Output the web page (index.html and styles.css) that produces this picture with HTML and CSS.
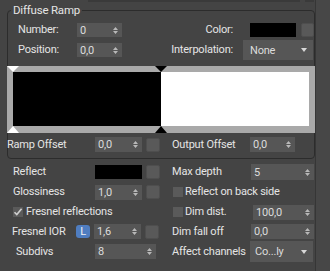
FILE: index.html
```html
<!DOCTYPE html>
<html>
<head>
<meta charset="utf-8">
<link rel="stylesheet" href="styles.css">
</head>
<body>
<div class="app">
  <div class="panel">
    <div class="cutoff"><span class="cut-field"></span><span class="cut-btn"></span></div>
    <fieldset class="group">
      <legend>Diffuse Ramp</legend>
      <div class="grow row-a">
        <span class="lbl glbl">Number:</span>
        <div class="spin gspin"><span>0</span><svg class="arr" width="5" height="7" viewBox="0 0 5 7"><path d="M2.5 0L5 3H0zM0 4H5L2.5 7z"/></svg></div>
        <span class="lbl rlbl">Color:</span>
        <div class="swatch color-sw"></div>
        <div class="sq color-btn"></div>
      </div>
      <div class="grow row-b">
        <span class="lbl glbl">Position:</span>
        <div class="spin gspin"><span>0,0</span><svg class="arr" width="5" height="7" viewBox="0 0 5 7"><path d="M2.5 0L5 3H0zM0 4H5L2.5 7z"/></svg></div>
        <span class="lbl rlbl">Interpolation:</span>
        <div class="drop interp"><span>None</span><svg class="darr" width="6" height="4" viewBox="0 0 6 4"><path d="M0 0H6L3 4z"/></svg></div>
      </div>
      <div class="ramp">
        <div class="ramp-black"></div>
        <div class="ramp-white"></div>
        <svg class="mark mark-tl" width="12" height="6" viewBox="0 0 12 6"><path d="M0 0H12L6 6z" fill="#fff"/></svg>
        <svg class="mark mark-bl" width="12" height="7" viewBox="0 0 12 7"><path d="M0 7H12L6 0z" fill="#fff"/></svg>
        <svg class="mark mark-tm" width="12" height="6" viewBox="0 0 12 6"><path d="M0 0H12L6 6z" fill="#000"/></svg>
        <svg class="mark mark-bm" width="12" height="7" viewBox="0 0 12 7"><path d="M0 7H12L6 0z" fill="#000"/></svg>
      </div>
      <div class="grow row-c">
        <span class="lbl olbl">Ramp Offset</span>
        <div class="spin ospin"><span>0,0</span><svg class="arr" width="5" height="7" viewBox="0 0 5 7"><path d="M2.5 0L5 3H0zM0 4H5L2.5 7z"/></svg></div>
        <div class="sq"></div>
        <span class="lbl olbl2">Output Offset</span>
        <div class="spin ospin2"><span>0,0</span><svg class="arr" width="5" height="7" viewBox="0 0 5 7"><path d="M2.5 0L5 3H0zM0 4H5L2.5 7z"/></svg></div>
      </div>
    </fieldset>

    <div class="props">
      <div class="cell">
        <span class="lbl llbl">Reflect</span>
        <div class="swatch lsw"></div>
        <div class="sq"></div>
      </div>
      <div class="cell rc">
        <span class="lbl rplbl">Max depth</span>
        <div class="spin rspin tall"><span>5</span><svg class="arr" width="5" height="7" viewBox="0 0 5 7"><path d="M2.5 0L5 3H0zM0 4H5L2.5 7z"/></svg></div>
      </div>

      <div class="cell">
        <span class="lbl llbl">Glossiness</span>
        <div class="spin lspin"><span>1,0</span><svg class="arr" width="5" height="7" viewBox="0 0 5 7"><path d="M2.5 0L5 3H0zM0 4H5L2.5 7z"/></svg></div>
        <div class="sq"></div>
      </div>
      <div class="cell rc">
        <span class="cb"></span>
        <span class="lbl">Reflect on back side</span>
      </div>

      <div class="cell">
        <span class="cb on"><svg width="10" height="10" viewBox="0 0 10 10"><path d="M1.5 5.2L3.8 7.6L8.6 1.8" fill="none" stroke="#cfcfcf" stroke-width="1.6"/></svg></span>
        <span class="lbl">Fresnel reflections</span>
      </div>
      <div class="cell rc">
        <span class="cb"></span>
        <span class="lbl dimlbl">Dim dist.</span>
        <div class="spin dspin"><span>100,0</span><svg class="arr" width="5" height="7" viewBox="0 0 5 7"><path d="M2.5 0L5 3H0zM0 4H5L2.5 7z"/></svg></div>
      </div>

      <div class="cell">
        <span class="lbl iorlbl">Fresnel IOR</span>
        <span class="lbtn">L</span>
        <div class="spin lspin"><span>1,6</span><svg class="arr" width="5" height="7" viewBox="0 0 5 7"><path d="M2.5 0L5 3H0zM0 4H5L2.5 7z"/></svg></div>
        <div class="sq"></div>
      </div>
      <div class="cell rc">
        <span class="lbl rplbl">Dim fall off</span>
        <div class="spin rspin"><span>0,0</span><svg class="arr" width="5" height="7" viewBox="0 0 5 7"><path d="M2.5 0L5 3H0zM0 4H5L2.5 7z"/></svg></div>
      </div>

      <div class="cell">
        <span class="lbl sublbl">Subdivs</span>
        <div class="spin subspin"><span>8</span><svg class="arr" width="5" height="7" viewBox="0 0 5 7"><path d="M2.5 0L5 3H0zM0 4H5L2.5 7z"/></svg></div>
      </div>
      <div class="cell rc">
        <span class="lbl afflbl">Affect channels</span>
        <div class="drop affdrop"><span>Co...ly</span><svg class="darr" width="6" height="4" viewBox="0 0 6 4"><path d="M0 0H6L3 4z"/></svg></div>
      </div>
    </div>
  </div>
  <div class="strip"></div>
</div>
</body>
</html>
```

FILE: styles.css
```css
html, body {
  margin: 0;
  padding: 0;
  background: #444444;
}
body {
  font-family: Roboto, "Noto Sans", sans-serif;
  font-size: 11px;
  letter-spacing: -0.2px;
  color: #e4e4e4;
  width: 330px;
  height: 271px;
  overflow: hidden;
}
.app {
  display: flex;
  height: 271px;
}
.panel {
  width: 315px;
  flex: none;
}
.strip {
  flex: 1;
  background: #474747;
  border-left: 1px solid #363636;
}
.cutoff {
  height: 2px;
  display: flex;
}
.cut-field {
  margin-left: 88px;
  width: 212px;
  background: #3a3a3a;
}
.cut-btn {
  margin-left: 5px;
  width: 9px;
  background: #3a3a3a;
}
.group {
  margin: 1px 0 0 7px;
  padding: 6px 0 6px 0;
  width: 308px;
  box-sizing: border-box;
  border: 1px solid #2c2c2c;
  border-radius: 4px;
  min-width: 0;
}
.group legend {
  padding: 0 2px;
  margin-left: 3px;
  line-height: 14px;
  font-size: 11.5px;
}
.lbl {
  white-space: nowrap;
  line-height: 14px;
  flex: none;
}
.grow {
  display: flex;
  align-items: center;
}
.row-a {
  height: 14px;
}
.row-b {
  height: 20px;
  margin-top: 3px;
}
.glbl {
  width: 59px;
  padding-left: 10px;
}
.spin {
  display: flex;
  align-items: center;
  box-sizing: border-box;
  height: 15px;
  padding: 0 4px 0 3px;
  background: #565656;
  color: #dcdcdc;
  flex: none;
}
.spin .arr {
  margin-left: auto;
  fill: #b8b8b8;
}
.gspin {
  width: 45px;
  height: 14px;
}
.rlbl {
  width: 111px;
  text-align: right;
}
.swatch {
  background: #000;
  height: 14px;
  flex: none;
}
.color-sw {
  width: 46px;
  margin-left: 17px;
}
.sq {
  width: 14px;
  height: 14px;
  box-sizing: border-box;
  background: #595959;
  border: 1px solid #4e4e4e;
  border-radius: 2px;
  flex: none;
  margin-left: 4px;
}
.color-btn {
  width: 13px;
  margin-left: 5px;
}
.drop {
  display: flex;
  align-items: center;
  box-sizing: border-box;
  background: #565656;
  color: #dcdcdc;
  flex: none;
}
.drop .darr {
  margin-left: auto;
  fill: #d8d8d8;
}
.interp {
  width: 70px;
  height: 20px;
  margin-left: 10px;
  padding: 0 6px 0 7px;
}
.ramp {
  position: relative;
  margin: 6px -1px 0 -1px;
  height: 54px;
  border: 6px solid #a9a9a9;
  border-bottom-width: 7px;
  display: flex;
}
.ramp-black {
  flex: 1;
  background: #000;
}
.ramp-white {
  flex: 1;
  background: #fff;
}
.mark {
  position: absolute;
}
.mark-tl {
  left: -6px;
  top: -6px;
}
.mark-bl {
  left: -6px;
  bottom: -7px;
}
.mark-tm {
  left: calc(50% - 6px);
  top: -6px;
}
.mark-bm {
  left: calc(50% - 6px);
  bottom: -7px;
}
.row-c {
  height: 15px;
  margin-top: 4px;
}
.olbl {
  width: 88px;
  margin-left: -1px;
}
.ospin {
  width: 47px;
}
.olbl2 {
  width: 78px;
  margin-left: 12px;
}
.ospin2 {
  width: 45px;
}
.props {
  display: grid;
  grid-template-columns: 165px 150px;
  grid-template-rows: 20px 20px 20px 19px 21px;
  margin-top: 3px;
}
.cell {
  display: flex;
  align-items: center;
  padding-left: 13px;
}
.cell.rc {
  padding-left: 7px;
}
.llbl {
  width: 82px;
}
.lsw {
  width: 47px;
}
.lspin {
  width: 47px;
}
.rplbl {
  width: 79px;
}
.rspin {
  width: 63px;
}
.rspin.tall {
  height: 16px;
}
.cb {
  width: 10px;
  height: 10px;
  background: #5a5a5a;
  flex: none;
  margin: 0 2px 0 1px;
  display: flex;
}
.cb.on {
  margin-left: 0;
  margin-right: 3px;
}
.dimlbl {
  width: 68px;
}
.dspin {
  width: 61px;
}
.iorlbl {
  width: 64px;
  margin-left: -1px;
}
.lbtn {
  width: 14px;
  height: 13px;
  border-radius: 3px;
  background: #4f7dc0;
  color: #f0f0f0;
  display: flex;
  align-items: center;
  justify-content: center;
  font-size: 11px;
  margin-right: 4px;
  flex: none;
}
.sublbl {
  width: 79px;
  padding-left: 3px;
}
.subspin {
  width: 61px;
}
.afflbl {
  width: 78px;
}
.affdrop {
  width: 63px;
  height: 21px;
  padding: 0 6px 0 5px;
}
```
